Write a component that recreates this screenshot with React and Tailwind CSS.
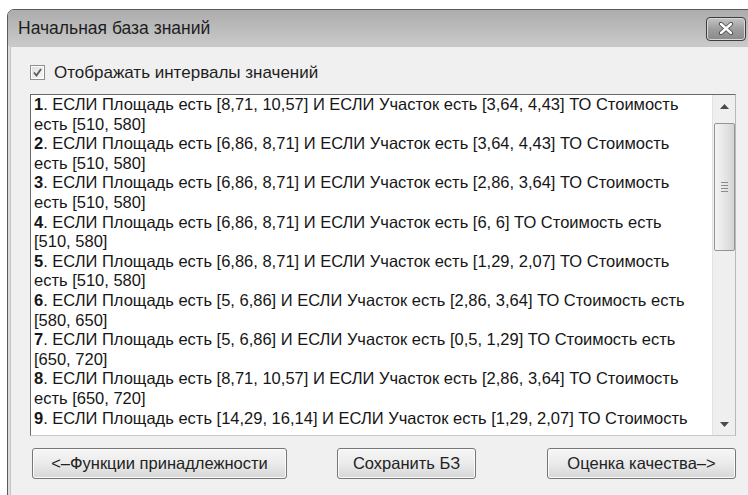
import React from "react";

const rules = [
  ["1", "ЕСЛИ Площадь есть [8,71, 10,57] И ЕСЛИ Участок есть [3,64, 4,43] ТО Стоимость", "есть [510, 580]"],
  ["2", "ЕСЛИ Площадь есть [6,86, 8,71] И ЕСЛИ Участок есть [3,64, 4,43] ТО Стоимость", "есть [510, 580]"],
  ["3", "ЕСЛИ Площадь есть [6,86, 8,71] И ЕСЛИ Участок есть [2,86, 3,64] ТО Стоимость", "есть [510, 580]"],
  ["4", "ЕСЛИ Площадь есть [6,86, 8,71] И ЕСЛИ Участок есть [6, 6] ТО Стоимость есть", "[510, 580]"],
  ["5", "ЕСЛИ Площадь есть [6,86, 8,71] И ЕСЛИ Участок есть [1,29, 2,07] ТО Стоимость", "есть [510, 580]"],
  ["6", "ЕСЛИ Площадь есть [5, 6,86] И ЕСЛИ Участок есть [2,86, 3,64] ТО Стоимость есть", "[580, 650]"],
  ["7", "ЕСЛИ Площадь есть [5, 6,86] И ЕСЛИ Участок есть [0,5, 1,29] ТО Стоимость есть", "[650, 720]"],
  ["8", "ЕСЛИ Площадь есть [8,71, 10,57] И ЕСЛИ Участок есть [2,86, 3,64] ТО Стоимость", "есть [650, 720]"],
  ["9", "ЕСЛИ Площадь есть [14,29, 16,14] И ЕСЛИ Участок есть [1,29, 2,07] ТО Стоимость", ""],
];

function Button({ children, className }) {
  return (
    <button
      className={
        "h-[31px] rounded-[3px] border border-[#777] bg-gradient-to-b from-[#f6f6f6] via-[#ebebeb] to-[#d6d6d6] text-[16.5px] text-[#222] shadow-[inset_0_0_0_1px_#fbfbfb] " +
        className
      }
    >
      {children}
    </button>
  );
}

export default function App() {
  return (
    <div
      className="w-[748px] h-[495px] overflow-hidden bg-white pl-[7px] pt-[9px]"
      style={{ fontFamily: '"Liberation Sans", Arial, sans-serif' }}
    >
      <div className="w-[760px] h-[500px] flex flex-col rounded-tl-[7px] border border-[#5a5a5a] bg-[#dcdcdc] overflow-hidden">
        {/* title bar */}
        <div className="h-[36px] shrink-0 flex items-center bg-gradient-to-b from-[#acacac] to-[#cacaca]">
          <span className="ml-[10px] text-[17.5px] text-[#1e1e1e]">Начальная база знаний</span>
          <div className="ml-auto mr-[20px] mt-[1px] w-[40px] h-[24px] rounded-[4px] border border-[#3d3d3d] bg-gradient-to-b from-[#c4c4c4] via-[#9e9e9e] to-[#8a8a8a] shadow-[inset_0_0_0_1px_#d8d8d8] flex items-center justify-center">
            <svg width="16" height="13" viewBox="0 0 16 13">
              <path d="M3 2 L13 11 M13 2 L3 11" stroke="#4a4a4a" strokeWidth="4.2" strokeLinecap="round" />
              <path d="M3 2 L13 11 M13 2 L3 11" stroke="#ffffff" strokeWidth="2.4" strokeLinecap="round" />
            </svg>
          </div>
        </div>

        {/* client area */}
        <div className="flex-1 ml-[2px] border-l border-t border-[#c6c6c6] bg-[#f0f0f0] flex flex-col">
          <div className="flex items-center mt-[18px] ml-[19px] h-[15px]">
            <div className="w-[15px] h-[15px] border border-[#8e8e8e] p-[1px] bg-white">
              <div className="w-full h-full bg-gradient-to-br from-[#dedede] to-[#f8f8f8] flex items-center justify-center">
                <svg width="11" height="11" viewBox="0 0 11 11">
                  <path d="M2 5.5 L4.5 8.5 L9 2" stroke="#5a5a5a" strokeWidth="1.8" fill="none" />
                </svg>
              </div>
            </div>
            <span className="ml-[9px] text-[17px] text-[#1e1e1e]">Отображать интервалы значений</span>
          </div>

          {/* rules list */}
          <div className="mt-[14px] ml-[19px] w-[706px] h-[342px] flex border border-[#6a6a6a] border-r-[#b8b8b8] border-b-[#c8c8c8] bg-white">
            <div className="flex-1 overflow-hidden pl-[3px] pt-[0px] text-[16.5px] leading-[19.6px] text-[#161616] whitespace-nowrap">
              {rules.map(([n, a, b]) => (
                <div key={n}>
                  <div>
                    <b className="font-bold">{n}</b>. {a}
                  </div>
                  {b && <div>{b}</div>}
                </div>
              ))}
            </div>
            {/* vertical scrollbar */}
            <div className="w-[23px] bg-[#efefef] border-l border-[#e2e2e2] flex flex-col items-center">
              <div className="h-[22px] flex items-center justify-center">
                <svg width="9" height="5" viewBox="0 0 9 5">
                  <path d="M0 5 L4.5 0 L9 5 Z" fill="#4a4a4a" />
                </svg>
              </div>
              <div className="mt-[6px] w-[21px] h-[128px] rounded-[2px] border border-[#959595] bg-gradient-to-r from-[#f4f4f4] via-[#e6e6e6] to-[#d4d4d4] flex flex-col items-center justify-center gap-[2px]">
                <div className="w-[7px] h-[1px] bg-[#8a8a8a]" />
                <div className="w-[7px] h-[1px] bg-[#8a8a8a]" />
                <div className="w-[7px] h-[1px] bg-[#8a8a8a]" />
                <div className="w-[7px] h-[1px] bg-[#8a8a8a]" />
              </div>
              <div className="flex-1" />
              <div className="h-[22px] flex items-center justify-center">
                <svg width="9" height="5" viewBox="0 0 9 5">
                  <path d="M0 0 L4.5 5 L9 0 Z" fill="#4a4a4a" />
                </svg>
              </div>
            </div>
          </div>

          {/* buttons */}
          <div className="flex mt-[12px] ml-[21px]">
            <Button className="w-[255px]">&lt;–Функции принадлежности</Button>
            <Button className="w-[139px] ml-[50px]">Сохранить БЗ</Button>
            <Button className="w-[189px] ml-[71px]">Оценка качества–&gt;</Button>
          </div>
        </div>
      </div>
    </div>
  );
}
